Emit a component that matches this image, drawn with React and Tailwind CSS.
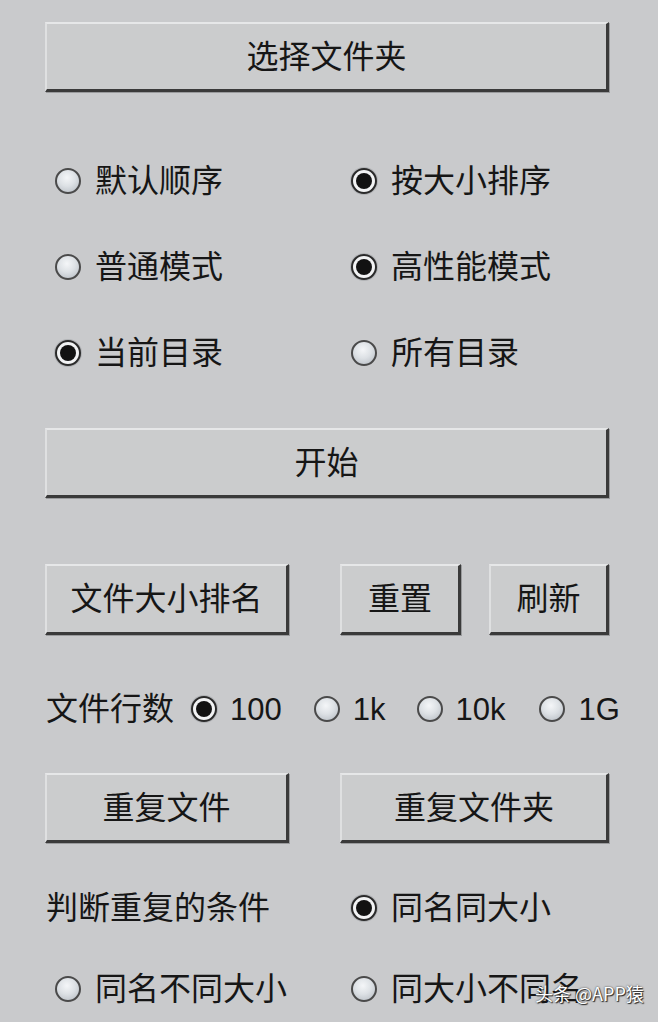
import React from "react";

const FONT = { fontFamily: '"Liberation Sans", "Noto Sans CJK SC", sans-serif' };

function Btn({ children, className = "" }) {
  return (
    <div
      className={
        "flex items-center justify-center bg-[#cbcccd] border-t-2 border-l-2 border-t-[#e6e7e8] border-l-[#dfe0e1] border-r-[3px] border-b-[3px] border-r-[#3a3a3a] border-b-[#3a3a3a] text-[32px] text-[#161616] leading-none shadow-[1px_1px_0_#9a9b9d] " +
        className
      }
    >
      {children}
    </div>
  );
}

function Radio({ checked }) {
  if (checked) {
    return (
      <div className="w-[26px] h-[26px] shrink-0 rounded-full border-2 border-[#2a2a2a] bg-[#f2f3f4] flex items-center justify-center shadow-[0_0_0_1px_#b0b2b5]">
        <div className="w-[16px] h-[16px] rounded-full bg-[#121212]" />
      </div>
    );
  }
  return (
    <div className="w-[26px] h-[26px] shrink-0 rounded-full border-2 border-[#4a4a4a] bg-[radial-gradient(circle_at_45%_35%,#f4f6f8_0%,#dde1e5_45%,#b3b9c0_100%)]" />
  );
}

function RadioItem({ checked, label, gap = "gap-[14px]", size = "text-[32px]" }) {
  return (
    <div className={"flex shrink-0 items-center whitespace-nowrap " + gap}>
      <Radio checked={checked} />
      <span className={size + " leading-none text-[#161616]"}>{label}</span>
    </div>
  );
}

export default function App() {
  return (
    <div
      className="relative w-[658px] h-[1022px] overflow-hidden bg-[#c9cacc] pl-[45px] pr-[49px] pt-[22px]"
      style={FONT}
    >
      <Btn className="h-[70px]">选择文件夹</Btn>

      <div className="mt-[46px] pl-[10px] grid grid-cols-[296px_1fr] auto-rows-[86px] items-center">
        <RadioItem label="默认顺序" />
        <RadioItem checked label="按大小排序" />
        <RadioItem label="普通模式" />
        <RadioItem checked label="高性能模式" />
        <RadioItem checked label="当前目录" />
        <RadioItem label="所有目录" />
      </div>

      <Btn className="mt-[32px] h-[70px]">开始</Btn>

      <div className="mt-[66px] flex h-[71px]">
        <Btn className="w-[244px]">文件大小排名</Btn>
        <Btn className="ml-[51px] w-[121px]">重置</Btn>
        <Btn className="ml-[28px] w-[120px]">刷新</Btn>
      </div>

      <div className="mt-[54px] -mr-[49px] h-[40px] flex items-center whitespace-nowrap">
        <span className="shrink-0 text-[32px] leading-none text-[#161616] pl-[1px]">文件行数</span>
        <div className="ml-[17px] shrink-0">
          <RadioItem checked label="100" gap="gap-[13px]" size="text-[31px]" />
        </div>
        <div className="ml-[32px] shrink-0">
          <RadioItem label="1k" gap="gap-[13px]" size="text-[31px]" />
        </div>
        <div className="ml-[31px] shrink-0">
          <RadioItem label="10k" gap="gap-[13px]" size="text-[31px]" />
        </div>
        <div className="ml-[34px] shrink-0">
          <RadioItem label="1G" gap="gap-[13px]" size="text-[31px]" />
        </div>
      </div>

      <div className="mt-[44px] flex h-[70px]">
        <Btn className="w-[244px]">重复文件</Btn>
        <Btn className="ml-[51px] flex-1">重复文件夹</Btn>
      </div>

      <div className="mt-[45px] pl-[10px] grid grid-cols-[296px_1fr] auto-rows-[40px] items-center gap-y-[41px]">
        <span className="-ml-[9px] whitespace-nowrap text-[32px] leading-none text-[#161616]">判断重复的条件</span>
        <RadioItem checked label="同名同大小" />
        <RadioItem label="同名不同大小" />
        <RadioItem label="同大小不同名" />
      </div>

      <div
        className="absolute left-[535px] top-[984px] text-[18px] leading-none text-white [text-shadow:0_0_2px_#333,1px_1px_1px_#222]"
        style={{ fontFamily: '"Noto Sans CJK SC", "Liberation Sans", sans-serif' }}
      >
        头条 @APP猿
      </div>
    </div>
  );
}
